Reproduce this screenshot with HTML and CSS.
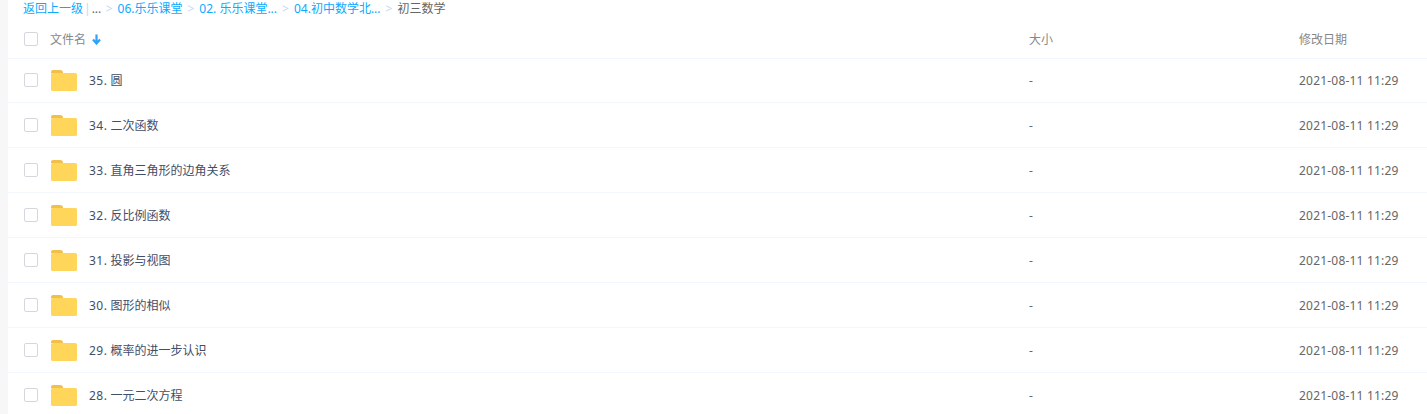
FILE: index.html
```html
<!DOCTYPE html>
<html lang="zh-CN">
<head>
    <meta charset="UTF-8">
    <title>初三数学</title>
    <link rel="stylesheet" href="styles.css">
</head>
<body>
    <div class="main">
        <!-- Breadcrumb -->
        <div class="crumbs">
            <a>返回上一级</a><span class="bar">|</span><span class="dots">...</span>
            <span class="sep">&gt;</span><a>06.乐乐课堂</a>
            <span class="sep">&gt;</span><a>02. 乐乐课堂...</a>
            <span class="sep">&gt;</span><a>04.初中数学北...</a>
            <span class="sep">&gt;</span><span class="current">初三数学</span>
        </div>

        <!-- File list -->
        <div class="head">
            <span class="check"></span>
            <div class="col-name">文件名
                <svg class="sort" width="9" height="11" viewBox="0 0 9 11"><path d="M4.5 0.5V9M1 5.5L4.5 9.5L8 5.5" fill="none" stroke="#2ea3f5" stroke-width="2.2"/></svg>
            </div>
            <div class="col-size">大小</div>
            <div class="col-date">修改日期</div>
        </div>
        <div id="rows"></div>
    </div>

    <script>
        const files = [
            ['35.', '圆'], ['34.', '二次函数'], ['33.', '直角三角形的边角关系'], ['32.', '反比例函数'],
            ['31.', '投影与视图'], ['30.', '图形的相似'], ['29.', '概率的进一步认识'], ['28.', '一元二次方程']
        ];

        const folderIcon = `
            <svg class="folder" width="26" height="21" viewBox="0 0 26 21">
                <path d="M0 2a2 2 0 0 1 2-2h7a3 3 0 0 1 3 3H0z" fill="#f0bf4c"/>
                <rect y="3" width="26" height="18" rx="1.5" fill="#ffd659"/>
            </svg>`;

        // Render one row per folder
        const rows = document.getElementById('rows');
        files.forEach(([num, name]) => {
            const row = document.createElement('div');
            row.className = 'row';
            row.innerHTML = `
                <span class="check"></span>
                ${folderIcon}
                <div class="col-name file-name"><span class="num">${num}</span> ${name}</div>
                <div class="col-size">-</div>
                <div class="col-date date">2021-08-11 11:29</div>
            `;
            rows.appendChild(row);
        });
    </script>
</body>
</html>
```

FILE: styles.css
```css
html, body {
    margin: 0;
    height: 100%;
    overflow: hidden;
}
body {
    background-color: #f7f7f7;
    font-family: "Noto Sans", "Noto Sans CJK SC", sans-serif;
    font-size: 12px;
    color: #424e67;
}
.main {
    margin-left: 8px;
    height: 100%;
    background-color: #fff;
}

/* Breadcrumb */
.crumbs {
    height: 17px;
    line-height: 17px;
    padding-left: 15px;
    white-space: nowrap;
    display: flex;
    align-items: center;
}
.crumbs a {
    color: #09aaff;
}
.bar {
    color: #c4d8f4;
    margin: 0 1px;
}
.dots {
    color: #666;
    width: 9px;
}
.sep {
    color: #c4d8f4;
    margin: 0 5px;
}
.current {
    color: #666;
}

/* File list */
.head, .row {
    display: flex;
    align-items: center;
    padding-left: 16px;
    box-sizing: border-box;
    border-bottom: 1px solid #f2f6fd;
}
.head {
    height: 42px;
    padding-top: 3px;
    color: #888;
}
.row {
    height: 45px;
}
.row:first-child {
    height: 44px;
    padding-bottom: 1px;
}
.check {
    width: 12px;
    height: 12px;
    flex: none;
    border: 1px solid #d4d7de;
    border-radius: 2px;
    background-color: #fff;
}
.folder {
    flex: none;
    margin-left: 13px;
    margin-right: 12px;
}
.head .col-name {
    margin-left: 12px;
    width: 979px;
}
.col-name {
    width: 940px;
    flex: none;
}
.num {
    letter-spacing: 0.5px;
}
.sort {
    margin-left: 3px;
    vertical-align: -1px;
}
.col-size {
    width: 270px;
    flex: none;
    color: #666;
}
.head .col-size, .head .col-date {
    color: #888;
}
.col-date {
    flex: none;
    color: #666;
}
.date {
    letter-spacing: 0.2px;
}
```
